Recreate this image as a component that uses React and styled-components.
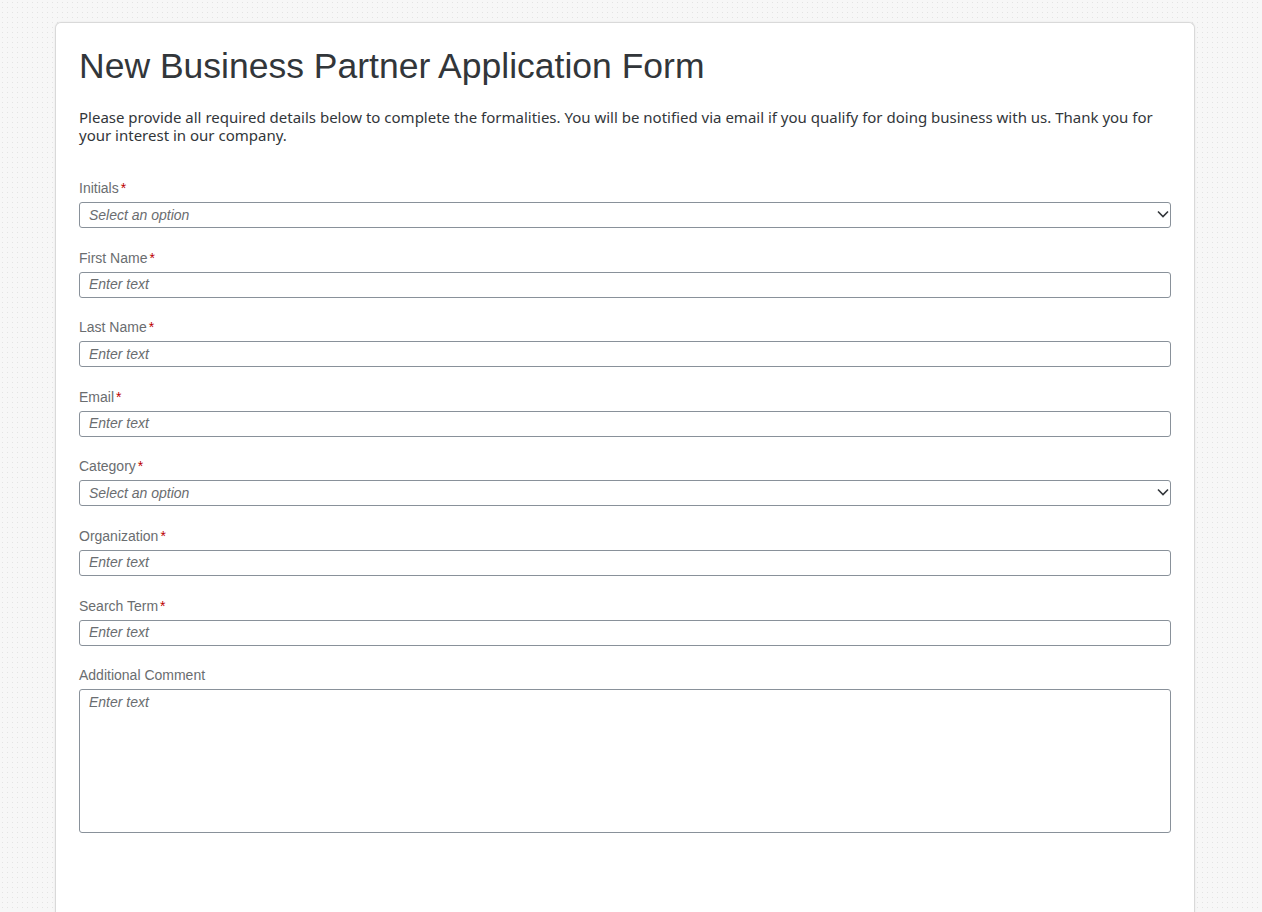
import React from "react";
import styled, { createGlobalStyle } from "styled-components";

const GlobalStyle = createGlobalStyle`
  html, body {
    margin: 0;
    padding: 0;
  }
  body {
    background-color: #f7f7f7;
    background-image: radial-gradient(#e3e3e3 0.8px, transparent 0.9px);
    background-size: 5px 5px;
    font-family: "Liberation Sans", Arial, sans-serif;
    color: #32363a;
    overflow: hidden;
  }
`;

const Page = styled.div`
  padding: 22px 0 0 55px;
  width: 1140px;
  height: 890px;
`;

const Card = styled.div`
  background: #ffffff;
  border: 1px solid #d9d9d9;
  border-bottom: none;
  border-radius: 6px 6px 0 0;
  box-shadow: 0 0 2px rgba(0, 0, 0, 0.08);
  padding: 23px 23px 80px;
  min-height: 960px;
  box-sizing: border-box;
`;

const Title = styled.h1`
  margin: 0;
  font-size: 35.5px;
  font-weight: 400;
  line-height: 41px;
  color: #32363a;
`;

const Intro = styled.p`
  margin: 21px 0 0;
  font-family: "Noto Sans", "Liberation Sans", sans-serif;
  font-size: 15px;
  line-height: 18px;
  color: #32363a;
  max-width: 1092px;
`;

const Form = styled.form`
  margin-top: 35px;
  display: flex;
  flex-direction: column;
  gap: 20.6px;
  width: 1092px;
`;

const Field = styled.div`
  display: flex;
  flex-direction: column;
  gap: 5px;
`;

const Label = styled.label`
  font-size: 14px;
  line-height: 18px;
  color: #6a6d70;
`;

const Star = styled.span`
  color: #bb0000;
  margin-left: 2px;
`;

const InputBox = styled.div`
  position: relative;
  height: ${(p) => (p.$tall ? "144px" : "26px")};
  border: 1px solid #89919a;
  border-radius: 3px;
  box-sizing: border-box;
  background: #fff;
  display: flex;
  align-items: ${(p) => (p.$tall ? "flex-start" : "center")};
  padding: ${(p) => (p.$tall ? "3px 9px" : "0 9px 1px")};
`;

const Placeholder = styled.span`
  font-size: 14px;
  line-height: 18px;
  font-style: italic;
  color: #6a6d70;
  flex: 1;
`;

const Chevron = styled.svg`
  position: absolute;
  right: 1px;
  top: 5px;
`;

const ChevronIcon = () => (
  <Chevron width="12" height="12" viewBox="0 0 12 12">
    <path d="M1 3.5 L6 8.5 L11 3.5" fill="none" stroke="#32363a" strokeWidth="1.6" />
  </Chevron>
);

const fields = [
  { label: "Initials", required: true, type: "select" },
  { label: "First Name", required: true },
  { label: "Last Name", required: true },
  { label: "Email", required: true },
  { label: "Category", required: true, type: "select" },
  { label: "Organization", required: true },
  { label: "Search Term", required: true },
  { label: "Additional Comment", required: false, type: "textarea" },
];

export default function App() {
  return (
    <>
      <GlobalStyle />
      <Page>
        <Card>
          <Title>New Business Partner Application Form</Title>
          <Intro>
            Please provide all required details below to complete the formalities. You will be
            notified via email if you qualify for doing business with us. Thank you for your
            interest in our company.
          </Intro>
          <Form>
            {fields.map((f) => (
              <Field key={f.label}>
                <Label>
                  {f.label}
                  {f.required && <Star>*</Star>}
                </Label>
                <InputBox $tall={f.type === "textarea"}>
                  <Placeholder>
                    {f.type === "select" ? "Select an option" : "Enter text"}
                  </Placeholder>
                  {f.type === "select" && <ChevronIcon />}
                </InputBox>
              </Field>
            ))}
          </Form>
        </Card>
      </Page>
    </>
  );
}
